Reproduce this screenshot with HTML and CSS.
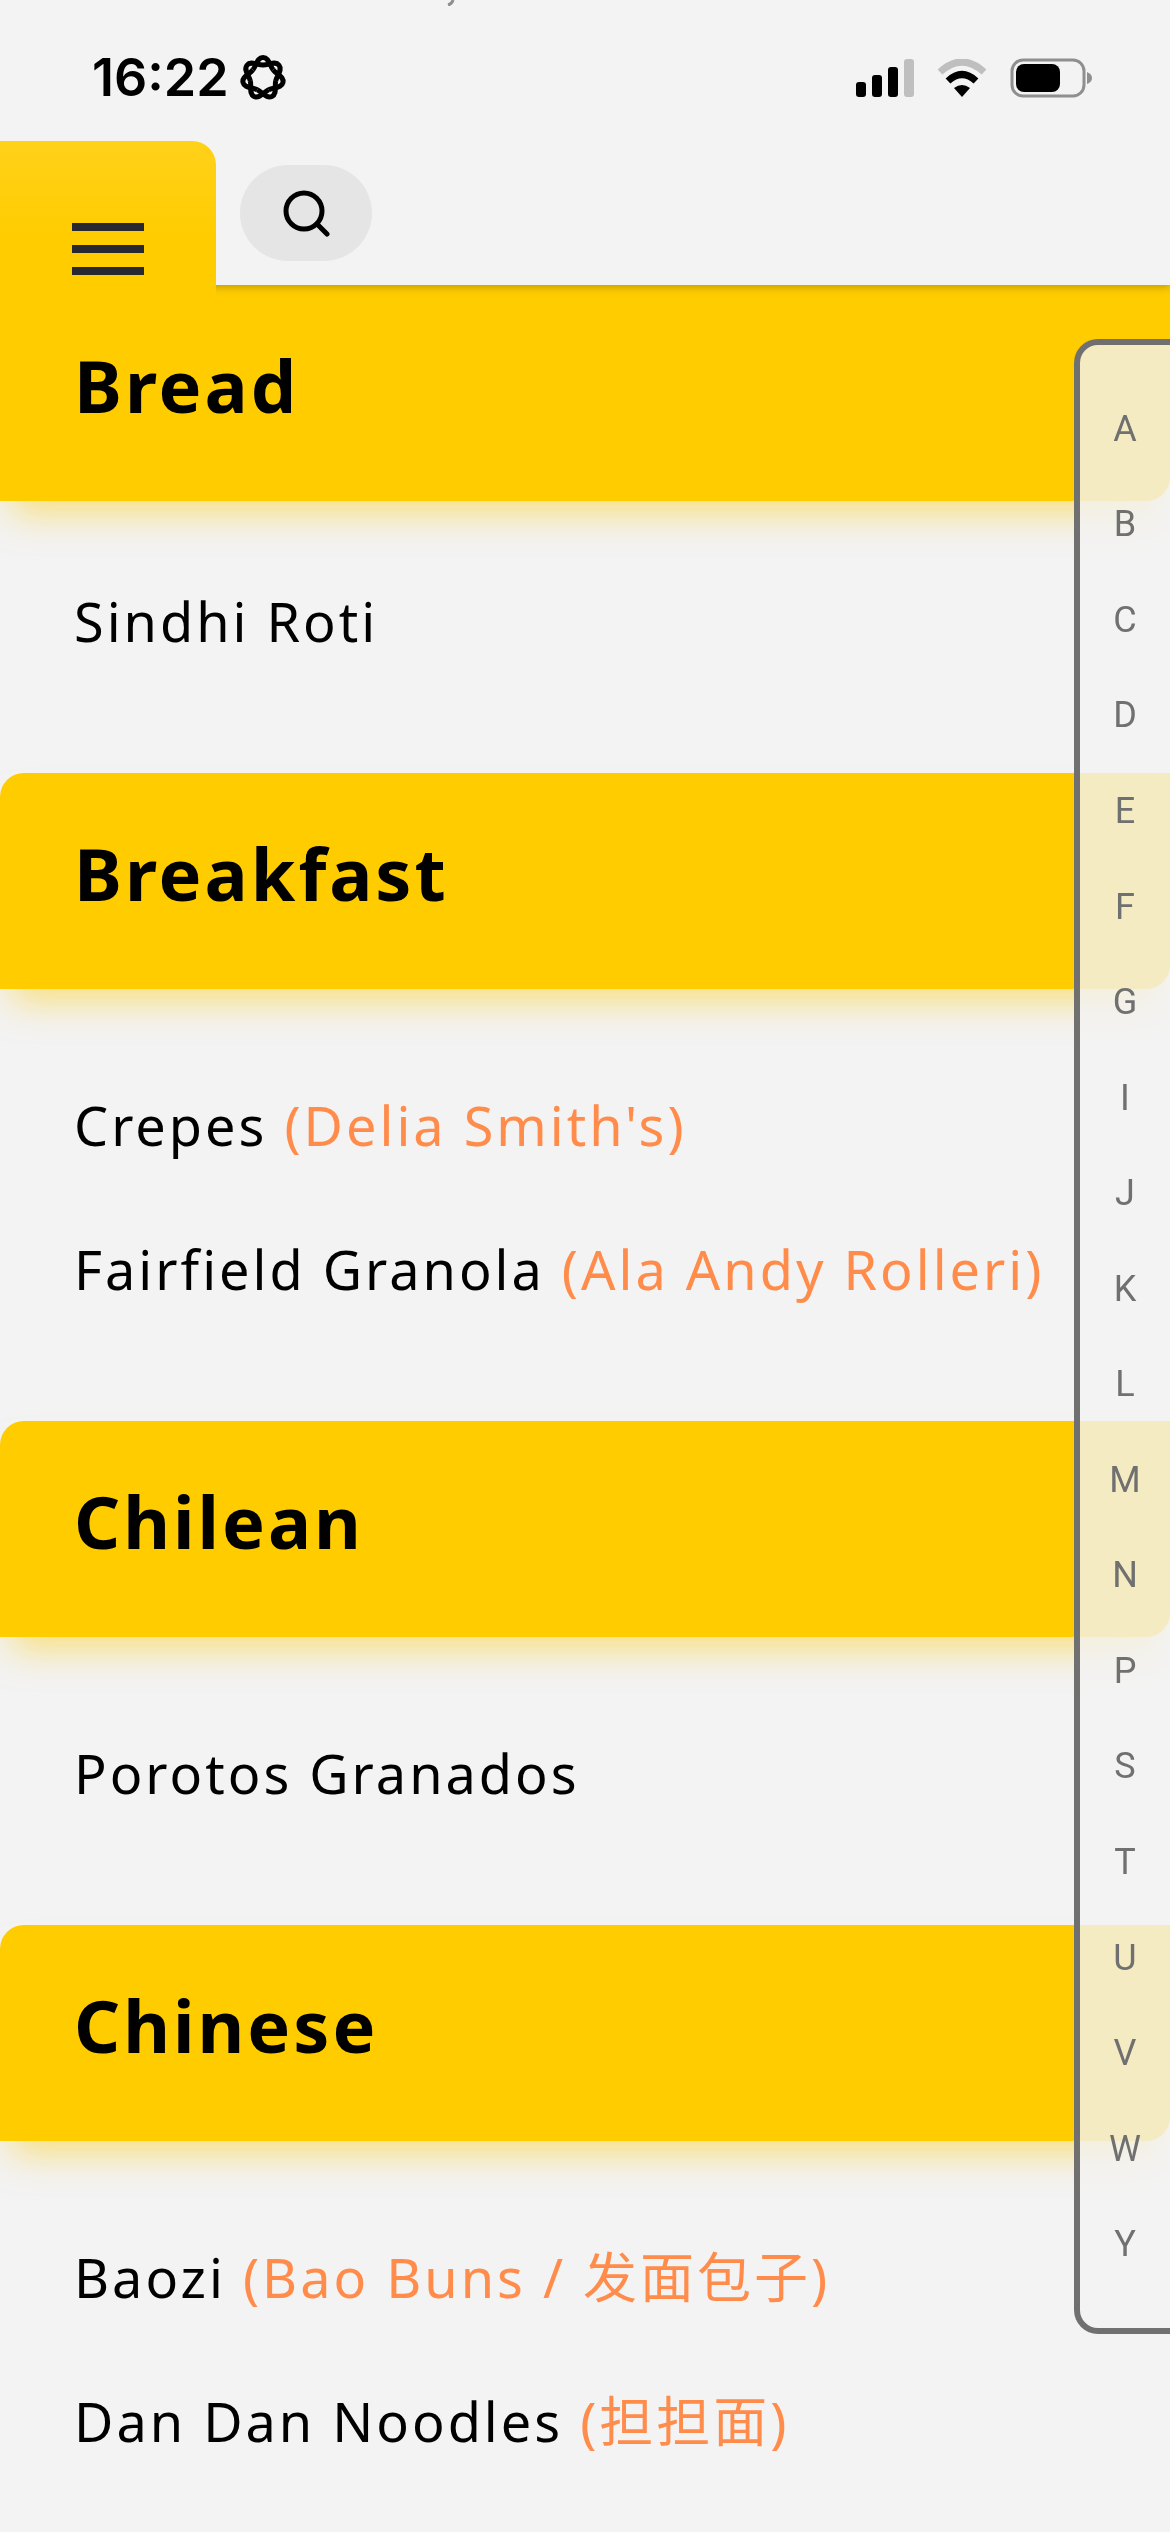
FILE: index.html
```html
<!DOCTYPE html>
<html lang="en">
<head>
    <meta charset="UTF-8">
    <meta name="viewport" content="width=device-width, initial-scale=1.0">
    <title>Recipes</title>
    <link rel="stylesheet" href="styles.css">
</head>
<body>
    <div class="top">
        <svg class="scrolled-mark" viewBox="0 0 8 6" width="8" height="6">
            <path d="M1 5Q5 4 6 0" fill="none" stroke="#8f8f8f" stroke-width="3"/>
        </svg>
        <div class="status-bar">
            <div class="clock">
                <span>16:22</span>
                <svg class="focus-icon" viewBox="-24 -24 48 48" width="48" height="48">
                    <defs>
                        <path id="petal" d="M-10.2-8.1C-6.4-12.8-6-20.5 0-20.5S6.4-12.8 10.2-8.1"/>
                    </defs>
                    <g fill="none" stroke="#000" stroke-width="5">
                        <use href="#petal"/>
                        <use href="#petal" transform="rotate(51.43)"/>
                        <use href="#petal" transform="rotate(102.86)"/>
                        <use href="#petal" transform="rotate(154.29)"/>
                        <use href="#petal" transform="rotate(205.71)"/>
                        <use href="#petal" transform="rotate(257.14)"/>
                        <use href="#petal" transform="rotate(308.57)"/>
                    </g>
                </svg>
            </div>
            <div class="status-icons">
                <svg viewBox="0 0 58 38" width="58" height="38">
                    <rect x="0" y="23" width="10" height="15" rx="3"/>
                    <rect x="16" y="16" width="10" height="22" rx="3"/>
                    <rect x="32" y="8" width="10" height="30" rx="3"/>
                    <rect x="48" y="0" width="10" height="38" rx="3" fill="#bfbfbf"/>
                </svg>
                <svg viewBox="0 0 50 38" width="50" height="38">
                    <path d="M3 13Q25-7 47 13" fill="none" stroke="#bfbfbf" stroke-width="7"/>
                    <path d="M11 22Q25 9 39 22" fill="none" stroke="#000" stroke-width="7"/>
                    <path d="M17 29Q25 23 33 29L25 38Z"/>
                </svg>
                <svg viewBox="0 0 82 40" width="82" height="40">
                    <rect x="2" y="2" width="72" height="36" rx="11" fill="none" stroke="#8f8f8f" stroke-width="3"/>
                    <rect x="6" y="6" width="44" height="28" rx="8"/>
                    <path d="M77 14Q82 16 82 20T77 26Z" fill="#8f8f8f"/>
                </svg>
            </div>
        </div>
        <div class="toolbar">
            <button class="menu-toggle" aria-label="Menu">
                <span class="menu-line"></span>
                <span class="menu-line"></span>
                <span class="menu-line"></span>
            </button>
            <button class="search-btn" aria-label="Search">
                <svg viewBox="0 0 48 48" width="48" height="48" fill="none" stroke="#000" stroke-width="5" stroke-linecap="round">
                    <circle cx="22" cy="22" r="18"/>
                    <path d="M35 35L45 45"/>
                </svg>
            </button>
        </div>
    </div>

    <main class="recipes">
        <section class="category current">
            <h2 class="category-title">Bread</h2>
            <ul class="recipe-list">
                <li><a href="#">Sindhi Roti</a></li>
            </ul>
        </section>
        <section class="category">
            <h2 class="category-title">Breakfast</h2>
            <ul class="recipe-list">
                <li><a href="#">Crepes <span class="note">(Delia Smith's)</span></a></li>
                <li><a href="#">Fairfield Granola <span class="note">(Ala Andy Rolleri)</span></a></li>
            </ul>
        </section>
        <section class="category">
            <h2 class="category-title">Chilean</h2>
            <ul class="recipe-list">
                <li><a href="#">Porotos Granados</a></li>
            </ul>
        </section>
        <section class="category">
            <h2 class="category-title">Chinese</h2>
            <ul class="recipe-list">
                <li><a href="#">Baozi <span class="note">(Bao Buns / <span lang="zh-Hans">发面包子</span>)</span></a></li>
                <li><a href="#">Dan Dan Noodles <span class="note">(<span lang="zh-Hans">担担面</span>)</span></a></li>
            </ul>
        </section>
    </main>

    <nav class="letters" aria-label="Alphabet">
        <a href="#">A</a>
        <a href="#">B</a>
        <a href="#">C</a>
        <a href="#">D</a>
        <a href="#">E</a>
        <a href="#">F</a>
        <a href="#">G</a>
        <a href="#">I</a>
        <a href="#">J</a>
        <a href="#">K</a>
        <a href="#">L</a>
        <a href="#">M</a>
        <a href="#">N</a>
        <a href="#">P</a>
        <a href="#">S</a>
        <a href="#">T</a>
        <a href="#">U</a>
        <a href="#">V</a>
        <a href="#">W</a>
        <a href="#">Y</a>
    </nav>
</body>
</html>
```
FILE: styles.css
```css
* {
    margin: 0;
    padding: 0;
    box-sizing: border-box;
}

body {
    font-family: 'Noto Sans', 'Noto Sans CJK SC', sans-serif;
    background: #f3f3f3;
    color: #000;
    min-height: 100vh;
    overflow-x: hidden;
}

a {
    color: inherit;
    text-decoration: none;
}

button {
    border: none;
    cursor: pointer;
}

/* status bar and toolbar */
.top {
    position: sticky;
    top: 0;
    z-index: 10;
    background: #f3f3f3;
    box-shadow: 0 2px 8px rgba(0, 0, 0, 0.25);
}

/* tail of a line that has scrolled under the status bar */
.scrolled-mark {
    position: absolute;
    top: 0;
    left: 447px;
}

.status-bar {
    display: flex;
    justify-content: space-between;
    align-items: center;
    height: 141px;
    padding: 14px 78px 0 92px;
}

.clock {
    display: flex;
    align-items: center;
    gap: 10px;
    font-family: Inter, sans-serif;
    font-size: 52px;
    font-weight: 600;
}

.status-icons {
    display: flex;
    align-items: center;
    gap: 23px;
}

.toolbar {
    display: flex;
    align-items: flex-start;
    gap: 24px;
    height: 144px;
}

.menu-toggle {
    display: flex;
    flex-direction: column;
    justify-content: flex-end;
    align-items: center;
    gap: 14px;
    width: 216px;
    height: 160px;
    padding-bottom: 26px;
    background: linear-gradient(#ffd11a, #ffcc00 60%);
    border-radius: 0 24px 0 0;
}

.menu-line {
    width: 72px;
    height: 8px;
    background: #282830;
}

.search-btn {
    display: flex;
    justify-content: center;
    align-items: center;
    width: 132px;
    height: 96px;
    margin-top: 24px;
    background: #e5e5e5;
    border-radius: 48px;
}

/* recipe categories */
.category-title {
    height: 216px;
    padding: 48px 74px;
    background: #ffcc00;
    border-radius: 24px 0 24px 0;
    box-shadow: 0 24px 36px -12px rgba(255, 204, 0, 0.5);
    font-size: 72px;
    line-height: 104px;
    letter-spacing: 3px;
}

.recipe-list {
    padding: 64px 74px 80px;
    list-style: none;
    font-size: 54px;
    line-height: 144px;
    letter-spacing: 3px;
    white-space: nowrap;
}

/* the pinned title covers the top of its own list */
.current .category-title {
    border-top-left-radius: 0;
    margin-bottom: -16px;
}

.note {
    color: #ff8c4b;
}

/* alphabet index */
.letters {
    position: fixed;
    top: 339px;
    right: 0;
    bottom: 198px;
    z-index: 5;
    display: flex;
    flex-direction: column;
    width: 96px;
    padding: 36px 0;
    background: rgba(243, 243, 243, 0.8);
    border: 6px solid #707070;
    border-right: none;
    border-radius: 24px 0 0 24px;
    color: #707070;
    font-family: Roboto, sans-serif;
    font-size: 36px;
}

.letters a {
    flex: 1;
    display: flex;
    justify-content: center;
    align-items: center;
}
```
